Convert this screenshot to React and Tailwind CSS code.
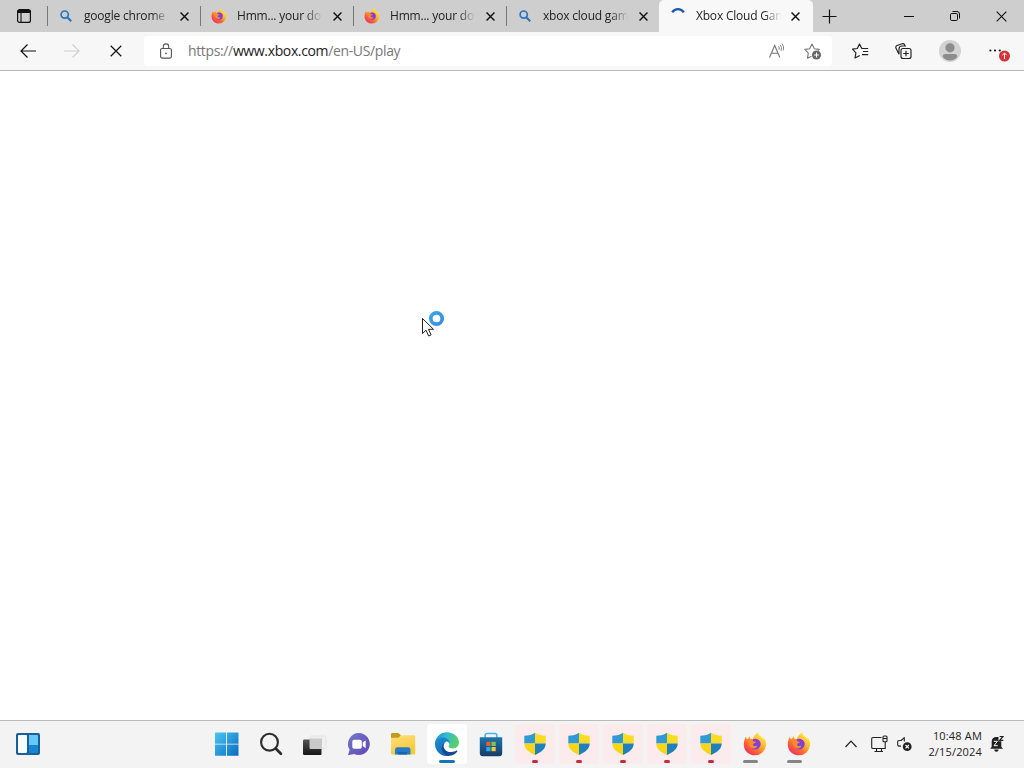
const TABS = [
  { title: 'google chrome -', icon: 'search' },
  { title: 'Hmm... your dow', icon: 'firefox' },
  { title: 'Hmm... your dow', icon: 'firefox' },
  { title: 'xbox cloud gam', icon: 'search' },
  { title: 'Xbox Cloud Gam', icon: 'spinner', active: true },
];

function Cross({ size = 10, width = 1.2 }) {
  return (
    <svg width={size} height={size} viewBox="0 0 10 10" fill="none" stroke="#111" strokeWidth={width}>
      <path d="M.6.6l8.8 8.8M9.4.6L.6 9.4" />
    </svg>
  );
}

function Firefox({ size, id }) {
  return (
    <svg width={size} height={size} viewBox="0 0 24 24">
      <defs>
        <linearGradient id={id} x1=".85" y1=".08" x2=".2" y2=".9">
          <stop offset="0" stopColor="#fff04a" />
          <stop offset=".4" stopColor="#ffb52e" />
          <stop offset=".7" stopColor="#ff6a32" />
          <stop offset="1" stopColor="#f2345a" />
        </linearGradient>
      </defs>
      <path
        fill={`url(#${id})`}
        d="M3 4.4l.4 2.3 1.6.1 1.7-2.7.6 2.8 2.5.3c.7-3 2.6-5.2 5.4-6.9.2 2.6 1.6 3.6 3.6 4.9 1.1.8 1.6 1.8 1.7 2.1l.3-1.2c1.9 2 2.6 4.5 2.3 7.2A11.2 11.2 0 0112 23.3C5.7 23.3.8 18.7.8 12.7c0-3.3.8-6 2.2-8.3z"
      />
      <circle cx="12.2" cy="12.2" r="5.4" fill="#7b42dc" />
      <path fill="#a42fd0" d="M11 7.1c3.4-.6 6.6 1.8 6.6 5.3-1.1-2.4-2.9-3-4.6-2.5z" />
      <path
        fill="#ff8a2c"
        d="M3.4 8.2l3.4-1.6 3 .8c-.3 1 .2 1.9 1 2.1l2.2.2c-.3 1.4-1.7 1.5-2.8 2-.5 1.9.8 2.7 2.6 2.2 1-.3 1.6.2 1.2.8-1 1.6-3.7 2.4-5.7 1C6 14.2 5.4 12 5.7 10z"
      />
    </svg>
  );
}

function TabIcon({ icon, index }) {
  if (icon === 'firefox') return <Firefox size={16} id={`tab-firefox-${index}`} />;
  if (icon === 'spinner') {
    return (
      <svg width="16" height="16" viewBox="0 0 16 16" fill="none">
        <path d="M2.2 4.3a7 7 0 0111.6 0" stroke="#1b5bab" strokeWidth="2.3" />
      </svg>
    );
  }
  return (
    <svg width="16" height="16" viewBox="0 0 16 16" fill="none" stroke="#2876bd">
      <circle cx="6.7" cy="6.6" r="3.6" strokeWidth="1.7" />
      <path d="M9.3 9.3l3.9 3.9" strokeWidth="2.1" />
    </svg>
  );
}

function Tab({ title, icon, active, index }) {
  return (
    <div
      className={
        active
          ? 'flex h-8 w-[154px] shrink-0 items-center rounded-t-[5px] bg-[#f8f8f8] pl-[11px]'
          : 'flex h-8 w-[153px] shrink-0 items-center'
      }
    >
      {!active && <div className="mr-[10px] h-5 w-px bg-[#777]" />}
      <TabIcon icon={icon} index={index} />
      <div className="ml-[10px] w-[87px] overflow-hidden text-[12px] leading-4 tracking-[-0.2px] whitespace-nowrap text-[#222] [mask-image:linear-gradient(to_right,#000_78%,transparent_98%)]">
        {title}
      </div>
      <div className={active ? 'ml-2' : 'ml-[9px]'}>
        <Cross size={9} width={1.6} />
      </div>
    </div>
  );
}

function TabStrip() {
  return (
    <div className="flex h-8 items-center bg-[#cecece]">
      <div className="flex w-[47px] shrink-0 items-center pl-[17px]">
        <svg width="14" height="14" viewBox="0 0 14 14" fill="none" stroke="#111">
          <rect x=".6" y=".6" width="12.8" height="12.8" rx="2" strokeWidth="1.2" />
          <path d="M1 2.5h12" strokeWidth="3" />
          <path d="M4 4v9.5" strokeWidth="1.1" />
        </svg>
      </div>
      {TABS.map((tab, i) => (
        <Tab key={i} index={i} {...tab} />
      ))}
      <div className="ml-[9px]">
        <svg width="15" height="15" viewBox="0 0 15 15" stroke="#111" strokeWidth="1.2">
          <path d="M7.5.5v14M.5 7.5h14" />
        </svg>
      </div>
      <div className="ml-auto flex items-center pr-[17px]">
        <svg width="10" height="10" viewBox="0 0 10 10" stroke="#111">
          <path d="M0 5.5h10" />
        </svg>
        <svg className="ml-[36px]" width="10" height="10" viewBox="0 0 10 10" fill="none" stroke="#111">
          <rect x=".5" y="2.5" width="7" height="7" rx="1.3" />
          <path d="M2.5.5H7A2.5 2.5 0 019.5 3v4.5" />
        </svg>
        <div className="ml-[36px]">
          <Cross size={11} width={1} />
        </div>
      </div>
    </div>
  );
}

function Toolbar() {
  return (
    <div className="flex h-[39px] items-center border-b border-[#b9b9b9] bg-[#f7f7f7] pl-5">
      <svg width="16" height="14" viewBox="0 0 16 14" fill="none" stroke="#111" strokeWidth="1.2">
        <path d="M16 7H1M7.5.5L1 7l6.5 6.5" />
      </svg>
      <svg className="ml-7" width="16" height="14" viewBox="0 0 16 14" fill="none" stroke="#d0d0d0" strokeWidth="1.2">
        <path d="M0 7h15M8.5.5L15 7l-6.5 6.5" />
      </svg>
      <div className="ml-[30px]">
        <Cross size={12} width={1} />
      </div>
      <div className="ml-[22px] flex h-[30px] w-[688px] items-center rounded-[3px] bg-white pl-4">
        <svg width="12" height="16" viewBox="0 0 12 16" fill="none" stroke="#555" strokeWidth="1.1">
          <rect x=".6" y="5.5" width="10.8" height="9.6" rx="1.5" />
          <path d="M3.3 5.5V3.6a2.7 2.7 0 015.4 0v1.9" />
          <circle cx="6" cy="10.3" r=".9" fill="#555" stroke="none" />
        </svg>
        <div className="ml-4 text-[14px] leading-5 tracking-[-0.36px] text-[#777]">
          https://<span className="text-[#222]">www.xbox.com</span>/en-US/play
        </div>
        <svg className="mr-[18px] ml-auto" width="18" height="16" viewBox="0 0 18 16" fill="none" stroke="#777">
          <path d="M1.5 14.5L6.7 2.5l5.1 12M3.3 10.3h6.8" strokeWidth="1.1" />
          <path d="M10.5 3.2q1.2 1.5.6 3.7M12.2 1.8q2 2.4.9 6M14 .5q2.5 3.2 1.3 7" strokeWidth=".9" />
        </svg>
        <svg className="mr-[10px]" width="18" height="18" viewBox="0 0 18 18" fill="none">
          <path
            d="M7.5 14.2l-4 2 .8-5L.8 7.4l4.8-.7L8 2l2.3 4.7 5 .7-1.2 1.3"
            stroke="#777"
            strokeWidth="1.1"
            strokeLinejoin="round"
          />
          <circle cx="12.5" cy="13" r="4.5" fill="#656565" />
          <path d="M12.5 10.6v4.8M10.1 13h4.8" stroke="#fff" strokeWidth="1.1" />
        </svg>
      </div>
      <svg className="ml-5" width="17" height="16" viewBox="0 0 17 16" fill="none" stroke="#222" strokeWidth="1.2">
        <path d="M7.8 12.5L3 15l.9-5.2L.5 6.2l4.8-.7L7.5 1l2.3 4.5h6.4M11 8.5h5.2M10 11.6h6.2" strokeLinejoin="round" />
      </svg>
      <svg className="ml-[26px]" width="17" height="17" viewBox="0 0 17 17" fill="none" stroke="#222" strokeWidth="1.15">
        <rect x="6" y="5.5" width="10" height="10" rx="2" />
        <path d="M11 7.7v5.6M8.2 10.5h5.6M4 11.2L1 5.2a2 2 0 011-2.7L7 .8a2 2 0 012.6.9l.6 1.3H7a3 3 0 00-3 3z" />
      </svg>
      <svg className="ml-[27px]" width="22" height="22" viewBox="0 0 22 22">
        <circle cx="11" cy="11" r="11" fill="#d2d2d2" />
        <circle cx="11" cy="7.8" r="4.6" fill="#8c8c8c" />
        <path d="M3.8 16.7q0-2.7 2.6-2.7h9.2q2.6 0 2.6 2.7c-1.6 2.5-4.3 3.8-7.2 3.8s-5.6-1.3-7.2-3.8z" fill="#8c8c8c" />
      </svg>
      <svg className="mt-[5px] ml-[28px]" width="22" height="16" viewBox="0 0 22 16">
        <g fill="#111">
          <circle cx="1.4" cy="4.5" r="1.1" />
          <circle cx="6" cy="4.5" r="1.1" />
          <circle cx="10.8" cy="4.5" r="1.1" />
        </g>
        <circle cx="15.5" cy="10" r="5.5" fill="#d1333a" />
        <path d="M15.5 13.1V7.2M13.3 9.2l2.2-2.2 2.2 2.2" fill="none" stroke="#fff" />
      </svg>
    </div>
  );
}

function Widgets() {
  return (
    <svg width="24" height="22" viewBox="0 0 24 22">
      <rect width="24" height="22" rx="2" fill="#1a5f96" />
      <rect x="2" y="2" width="9" height="18" rx="1" fill="#f7fcff" />
      <path d="M13 2h8a1 1 0 011 1v9h-9z" fill="#65c9fa" />
      <path d="M13 12h9v7a1 1 0 01-1 1h-8z" fill="#1686d4" />
    </svg>
  );
}

function Start() {
  return (
    <svg width="24" height="24" viewBox="0 0 24 24">
      <defs>
        <linearGradient id="start" gradientUnits="userSpaceOnUse" x1="0" y1="0" x2="24" y2="24">
          <stop stopColor="#4ac8f3" />
          <stop offset="1" stopColor="#0969bd" />
        </linearGradient>
      </defs>
      <path d="M.5.5h10.6v11.2H0V1a.5.5 0 01.5-.5zM12 .5h11a.5.5 0 01.5.5v10.7H12zM0 12.5h11.1v11.2H.5a.5.5 0 01-.5-.5zM12 12.5h11.5v10.7a.5.5 0 01-.5.5H12z" fill="url(#start)" />
    </svg>
  );
}

function SearchIcon() {
  return (
    <svg width="24" height="24" viewBox="0 0 24 24" fill="none" stroke="#2c2c2c">
      <circle cx="10.5" cy="10.2" r="8.4" strokeWidth="2.1" />
      <path d="M16.7 16.5l5.2 5.3" strokeWidth="2.7" strokeLinecap="round" />
    </svg>
  );
}

function TaskView() {
  return (
    <svg width="26" height="24" viewBox="0 0 26 24">
      <defs>
        <linearGradient id="task-back" x2="0" y2="1">
          <stop stopColor="#555" />
          <stop offset="1" stopColor="#151515" />
        </linearGradient>
      </defs>
      <rect x="8" y="4" width="16" height="13" rx="1" fill="#f0f0f0" stroke="#ddd" strokeWidth=".6" />
      <rect x="1" y="7.5" width="18.5" height="15.5" rx="1.2" fill="url(#task-back)" />
      <path d="M7.5 6.5H20v10.5H8.5a1 1 0 01-1-1z" fill="#c9c9c9" />
    </svg>
  );
}

function Chat() {
  return (
    <svg width="24" height="24" viewBox="0 0 24 24">
      <defs>
        <linearGradient id="chat" x2="1" y2="1">
          <stop stopColor="#7479c5" />
          <stop offset="1" stopColor="#6045b5" />
        </linearGradient>
      </defs>
      <path d="M12 1a11 11 0 11-5 20.9l-6 1.4 1.6-5.5A11 11 0 0112 1z" fill="url(#chat)" />
      <rect x="5.3" y="7.7" width="9.5" height="9" rx="1.8" fill="#fff" />
      <path d="M15.7 10.5l3-2.3v8l-3-2.3z" fill="#fff" />
    </svg>
  );
}

function Explorer() {
  return (
    <svg width="26" height="24" viewBox="0 0 26 24">
      <defs>
        <linearGradient id="folder" x2=".4" y2="1">
          <stop stopColor="#ffe07a" />
          <stop offset="1" stopColor="#f8c838" />
        </linearGradient>
      </defs>
      <path d="M1 7V2.3A1.3 1.3 0 012.3 1h6.1L11 3.3 8 7z" fill="#c49a1c" />
      <path d="M1 5.8h7.5L11 3.3h13a1.2 1.2 0 011.2 1.2v16.8a1.2 1.2 0 01-1.2 1.2H2.2A1.2 1.2 0 011 21.3z" fill="url(#folder)" />
      <path d="M5 22.5v-4.8a2.4 2.4 0 012.4-2.4h10.7a2.4 2.4 0 012.4 2.4v4.8z" fill="#267bc6" />
      <path d="M8.3 22.5v-2.6H17v2.6z" fill="#1265af" />
    </svg>
  );
}

function Edge() {
  return (
    <svg width="24" height="24" viewBox="0 0 24 24">
      <defs>
        <linearGradient id="edge-top" x2="1" y2=".3">
          <stop stopColor="#238eda" />
          <stop offset=".5" stopColor="#30bdd0" />
          <stop offset="1" stopColor="#58cf6a" />
        </linearGradient>
        <linearGradient id="edge-left" x2=".6" y2="1">
          <stop stopColor="#1c93d4" />
          <stop offset="1" stopColor="#1866b8" />
        </linearGradient>
      </defs>
      <path d="M0 11.2C.4 5 5.4.2 12 .2c7.2 0 12 5.3 12 10.4 0 3.6-2.7 5.8-6.2 5.8-3.3 0-4.8-1.3-3.8-2.6 1.3-1.9-.5-5.3-5.1-5.3C4.4 8.5 1.1 10.8 0 13.3z" fill="url(#edge-top)" />
      <path d="M0 12c0-4 3.2-6.6 7.5-6.6 4 0 7 2.6 7.4 5.8-1.2-1.6-3.2-2-4.4-1.2C5.8 13 8.2 22.4 15.5 23.4 7.3 26 0 20 0 12z" fill="url(#edge-left)" />
      <path d="M9.8 10.8c-3.2 3.5.2 9.3 6.3 9.3 2.3 0 4.5-.8 5.5-1.5.7-.5 1.1.1.8.7-1.5 2.5-5 4.8-9.2 4.5-6.6-.8-8.8-10-3.4-13z" fill="#164a90" />
    </svg>
  );
}

function Store() {
  return (
    <svg width="24" height="25" viewBox="0 0 24 25">
      <defs>
        <linearGradient id="store" x2="0" y2="1">
          <stop stopColor="#1c76ad" />
          <stop offset="1" stopColor="#153a68" />
        </linearGradient>
      </defs>
      <path d="M6.2 7V3.2a1.7 1.7 0 011.7-1.7h8.2a1.7 1.7 0 011.7 1.7V7" fill="none" stroke="#43b7e8" strokeWidth="1.6" />
      <path d="M.8 5.2h22.4v16a3 3 0 01-3 3H3.8a3 3 0 01-3-3z" fill="url(#store)" />
      <path d="M7.3 9.8h4.2V14H7.3z" fill="#f15b2e" />
      <path d="M12.5 9.8h4.2V14h-4.2z" fill="#86c447" />
      <path d="M7.3 15h4.2v4.2H7.3z" fill="#27aee8" />
      <path d="M12.5 15h4.2v4.2h-4.2z" fill="#fbc52c" />
    </svg>
  );
}

function Shield({ id }) {
  return (
    <svg width="24" height="24" viewBox="0 0 24 24">
      <defs>
        <clipPath id={id}>
          <path d="M12 .7c2.7 2 6.2 2.9 10.7 3v8c0 5.2-4.8 8.6-10.7 11.2C6.1 20.3 1.3 16.9 1.3 11.7v-8C5.8 3.6 9.3 2.7 12 .7z" />
        </clipPath>
      </defs>
      <g clipPath={`url(#${id})`}>
        <path d="M0 0h12v11.5H0z" fill="#2f9ad3" />
        <path d="M12 0h12v11.5H12z" fill="#fbdc20" />
        <path d="M0 11.5h12V24H0z" fill="#f8d517" />
        <path d="M12 11.5h12V24H12z" fill="#1f80bd" />
      </g>
    </svg>
  );
}

const APPS = [
  { icon: <Start /> },
  { icon: <SearchIcon /> },
  { icon: <TaskView /> },
  { icon: <Chat /> },
  { icon: <Explorer /> },
  { icon: <Edge />, cell: 'bg-white', bar: 'w-4 bg-[#1675b9]' },
  { icon: <Store /> },
  ...[0, 1, 2, 3, 4].map((n) => ({
    icon: <Shield id={`shield-${n}`} />,
    cell: 'bg-[#fcebec]',
    bar: 'w-[6px] bg-[#c42b3c]',
  })),
  { icon: <Firefox size={24} id="task-firefox-1" />, bar: 'w-[15px] bg-[#858585] mr-[9px]' },
  { icon: <Firefox size={24} id="task-firefox-2" />, bar: 'w-[15px] bg-[#858585] mr-[9px]' },
];

function Tray() {
  return (
    <div className="flex flex-1 items-center justify-end pr-5 pb-[2px]">
      <svg width="12" height="8" viewBox="0 0 12 8" fill="none" stroke="#222" strokeWidth="1.2">
        <path d="M.5 7L6 1.2 11.5 7" />
      </svg>
      <svg className="ml-[14px]" width="17" height="18" viewBox="0 0 17 18" fill="none" stroke="#222" strokeWidth="1.1">
        <path d="M10.5 2.5H2a1.3 1.3 0 00-1.3 1.3v8.4A1.3 1.3 0 002 13.5h12.2V7M5.5 13.5v3M3.5 16.5H12M10.5 13.5v3" />
        <rect x="12" y="1" width="4" height="5.8" rx="1" />
        <path d="M12 3.5h4" />
      </svg>
      <svg className="ml-[9px]" width="16" height="16" viewBox="0 0 16 16" fill="none" stroke="#222" strokeWidth="1.1">
        <path d="M7.3 5.5V1.6L4.1 4.5H2A1.3 1.3 0 00.7 5.8v3A1.3 1.3 0 002 10.1h2" strokeLinejoin="round" />
        <circle cx="10.2" cy="10.7" r="4.4" fill="#222" stroke="none" />
        <path d="M8.5 9l3.4 3.4M11.9 9l-3.4 3.4" stroke="#fff" />
      </svg>
      <div className="ml-3 w-[57px] text-right text-[11px] leading-4 tracking-[0.17px] whitespace-nowrap text-[#222]">
        <div>10:48 AM</div>
        <div>2/15/2024</div>
      </div>
      <svg className="ml-[8px]" width="14" height="17" viewBox="0 0 14 17">
        <path d="M1.7 6.5C1.7 3.5 3.7 2 6.2 2h2.3v4.2h2.8v5.6l1.7 2H.2l1.5-2zM4.2 14.6h4.4a2.2 2.2 0 01-4.4 0z" fill="#202020" />
        <path d="M3.8 6.3h3.6l-3.4 4.4h3.8" fill="none" stroke="#fff" strokeWidth="1" />
        <path d="M9.6 1.5h3.3L9.7 5.3h3.6" fill="none" stroke="#202020" strokeWidth="1.2" />
      </svg>
    </div>
  );
}

function Taskbar() {
  return (
    <div className="flex h-12 items-center border-t border-[#bababa] bg-[#f3f3f3]">
      <div className="w-[205px] shrink-0 pb-[2px] pl-4">
        <Widgets />
      </div>
      {APPS.map((app, i) => (
        <div key={i} className="flex h-full w-11 shrink-0 justify-center pt-[3px]">
          <div className={`flex h-10 w-10 flex-col items-center rounded-[3px] pt-[8px] ${app.cell || ''}`}>
            <div className="flex h-6 items-center">{app.icon}</div>
            {app.bar && <div className={`mt-[4px] h-[3px] rounded-full ${app.bar}`} />}
          </div>
        </div>
      ))}
      <Tray />
    </div>
  );
}

function Pointer() {
  return (
    <div className="absolute top-[309px] left-[421px]">
      <svg width="26" height="30" viewBox="0 0 26 30">
        <defs>
          <linearGradient id="busy" x2="1" y2="1">
            <stop stopColor="#35a5e7" />
            <stop offset="1" stopColor="#3a8be0" />
          </linearGradient>
        </defs>
        <circle cx="15.5" cy="9.5" r="5.7" fill="none" stroke="url(#busy)" strokeWidth="3.7" />
        <path d="M1.5 9.5v15l3.5-3.3 2.6 5.8 2.5-1.1-2.6-5.6h5z" fill="#fff" stroke="#222" strokeWidth="1" />
      </svg>
    </div>
  );
}

export default function App() {
  return (
    <div className="relative flex h-screen w-screen flex-col overflow-hidden bg-white font-['Open_Sans','Noto_Sans',sans-serif]">
      <TabStrip />
      <Toolbar />
      <main className="flex-1 bg-white" />
      <Taskbar />
      <Pointer />
    </div>
  );
}
